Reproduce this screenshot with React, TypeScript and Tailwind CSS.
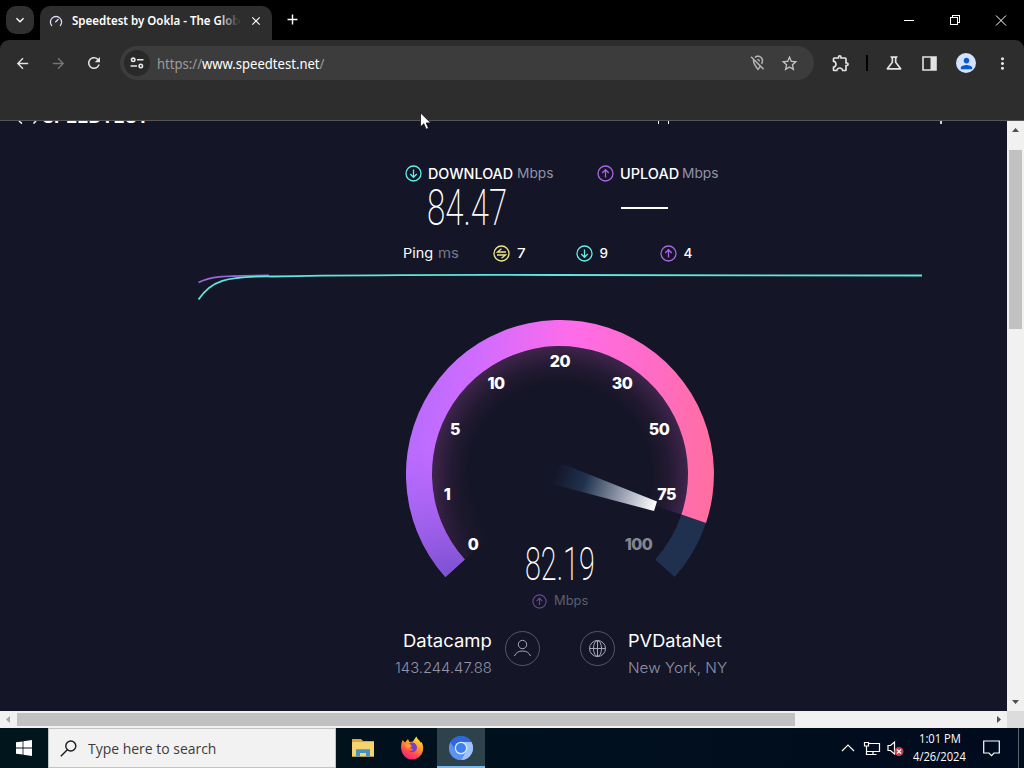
import { useLayoutEffect, useRef, useState } from "react";
import type { ReactNode } from "react";
import {
  MdAdd,
  MdArrowBack,
  MdArrowForward,
  MdClose,
  MdExpandMore,
  MdMoreVert,
  MdOutlineExtension,
  MdOutlineLocationOff,
  MdOutlineScience,
  MdPerson,
  MdRefresh,
  MdStarBorder,
} from "react-icons/md";

// Keeps a label at a set width whatever face ends up rendering it
function Fit({
  w,
  className = "",
  children,
}: {
  w: number;
  className?: string;
  children: ReactNode;
}) {
  const ref = useRef<HTMLSpanElement>(null);
  const [scale, setScale] = useState(1);

  useLayoutEffect(() => {
    if (ref.current) setScale(w / ref.current.offsetWidth);
  }, [w]);

  return (
    <span className={`block shrink-0 whitespace-nowrap ${className}`} style={{ width: w }}>
      <span ref={ref} className="inline-block origin-left" style={{ transform: `scaleX(${scale})` }}>
        {children}
      </span>
    </span>
  );
}

function RoundArrow({ dir, size = 17 }: { dir: "down" | "up" | "both"; size?: number }) {
  const color = dir === "down" ? "#62f0e6" : dir === "up" ? "#a966e0" : "#f0e68c";
  return (
    <svg width={size} height={size} viewBox="0 0 17 17" fill="none" stroke={color} strokeWidth="1.3" className="shrink-0">
      <circle cx="8.5" cy="8.5" r="7.5" />
      {dir === "down" && <path d="M8.5 4.500v7.800M5.200 9l3.300 3.300L11.800 9" />}
      {dir === "up" && <path d="M8.500 12.500V4.700M5.200 8l3.300-3.300L11.800 8" />}
      {dir === "both" && <path d="M13 7H4.500L8.500 3.800M4 10h8.500l-4 3.200" />}
    </svg>
  );
}

function TitleBar() {
  return (
    <div className="flex h-10 items-end bg-black text-white">
      <div className="mb-[6px] ml-[6px] flex h-7 w-7 items-center justify-center rounded-[10px] bg-[#303030]">
        <MdExpandMore size={16} />
      </div>
      <div className="ml-[6px] flex h-[34px] w-[232px] items-center rounded-t-[10px] bg-[#2d2d2d] pb-[4px]">
        <svg width="14" height="14" viewBox="0 0 14 14" fill="none" stroke="#dcdcf5" strokeWidth="1.3" className="ml-[9px]">
          <path d="M3 12A5.600 5.600 0 1 1 11 12M6.300 8.200 9.500 5" />
        </svg>
        <div className="relative ml-[9px]">
          <Fit w={167} className="font-['Noto_Sans'] text-xs font-semibold">
            Speedtest by Ookla - The Glob
          </Fit>
          <span className="absolute inset-y-0 right-0 w-5 bg-linear-to-r from-transparent to-[#2d2d2d]" />
        </div>
        <MdClose size={14} className="ml-[10px]" />
      </div>
      <MdAdd size={17} className="mb-[12px] ml-3" />
      <div className="ml-auto flex h-10 items-center">
        <svg width="120" height="12" viewBox="0 0 120 12" fill="none" stroke="white" shapeRendering="crispEdges" className="mr-[8px]">
          <path d="M8 6.500h10M54.500 3.500h7v7h-7zM56.500 3.500v-2h7v7h-2" />
          <path d="m100 1.500 10 10m0-10-10 10" shapeRendering="auto" />
        </svg>
      </div>
    </div>
  );
}

function Toolbar() {
  return (
    <div className="h-20 bg-black">
      <div className="flex h-20 items-start rounded-t-[9px] bg-[#2d2d2d] pt-[6px]">
        <div className="flex h-[34px] items-center text-[#e3e3e3]">
          <MdArrowBack size={17} className="ml-[13.5px]" />
          <MdArrowForward size={17} className="ml-[19px] text-[#757575]" />
          <MdRefresh size={18} className="ml-[18.5px]" />
        </div>
        <div className="ml-[17px] flex h-[34px] w-[694px] items-center rounded-full bg-[#3c3c3c]">
          <div className="ml-[4px] flex h-[26px] w-[26px] items-center justify-center rounded-full bg-[#292929]">
            <svg width="14" height="12" viewBox="0 0 14 12" fill="none" stroke="#e8e8e8" strokeWidth="1.600">
              <circle cx="3.200" cy="2.800" r="1.700" />
              <circle cx="10.800" cy="9" r="1.700" />
              <path d="M7 2.800h6.500M.5 9H7" />
            </svg>
          </div>
          <Fit w={167} className="ml-[7px] pt-px font-['Noto_Sans'] text-sm text-[#9c9c9c]">
            https://<span className="text-white">www.speedtest.net</span>/
          </Fit>
          <MdOutlineLocationOff size={18} className="ml-[424.5px] text-[#b5b5b5]" />
          <MdStarBorder size={19} className="ml-[13px] text-[#c7c7c7]" />
        </div>
        <div className="flex h-[34px] items-center text-[#e3e3e3]">
          <MdOutlineExtension size={20} className="ml-[17px]" />
          <span className="ml-[15px] h-4 w-[2px] bg-black" />
          <MdOutlineScience size={20} className="ml-[16px]" />
          <svg width="15" height="15" viewBox="0 0 15 15" className="ml-[18px]">
            <path d="M1 1h13v13H1z" fill="none" stroke="#e3e3e3" strokeWidth="1.600" />
            <path d="M8.500 1H14v13H8.500z" fill="#e3e3e3" />
          </svg>
          <span className="ml-[19px] flex h-5 w-5 items-center justify-center rounded-full bg-[#d3e3fd] text-[#0b57d0]">
            <MdPerson size={17} />
          </span>
          <MdMoreVert size={19} className="ml-[17px]" />
        </div>
      </div>
    </div>
  );
}

const ticks = [
  { label: "0", x: 67, y: 224 },
  { label: "1", x: 41, y: 174 },
  { label: "5", x: 49, y: 109 },
  { label: "10", x: 90, y: 63 },
  { label: "20", x: 154, y: 41 },
  { label: "30", x: 216, y: 63 },
  { label: "50", x: 253, y: 109 },
  { label: "75", x: 260.5, y: 174 },
  { label: "100", x: 232.5, y: 224 },
];

const ARC = "M39.400 256.900A154 154 0 1 1 300 202.900L275.400 194.600A128 128 0 1 0 58.700 239.500Z";

function Gauge() {
  return (
    <svg width="308" height="258" viewBox="0 0 308 258" className="block">
      <defs>
        <linearGradient id="arc" gradientUnits="userSpaceOnUse" x1="0" y1="130" x2="308" y2="160">
          <stop offset="0" stopColor="#b86bff" />
          <stop offset=".2" stopColor="#d06cff" />
          <stop offset=".5" stopColor="#ff6cea" />
          <stop offset=".8" stopColor="#ff6cc0" />
          <stop offset="1" stopColor="#ff6f9e" />
        </linearGradient>
        <radialGradient id="shade" gradientUnits="userSpaceOnUse" cx="50" cy="275" r="150">
          <stop offset="0" stopColor="#6a4cc8" />
          <stop offset=".25" stopColor="#7650d0" stopOpacity=".8" />
          <stop offset="1" stopColor="#9060e8" stopOpacity="0" />
        </radialGradient>
        <radialGradient id="glow" gradientUnits="userSpaceOnUse" cx="154" cy="154" r="128">
          <stop offset=".7" stopColor="#a04090" stopOpacity="0" />
          <stop offset=".85" stopColor="#a848a0" stopOpacity=".1" />
          <stop offset="1" stopColor="#b04cb0" stopOpacity=".28" />
        </radialGradient>
        <radialGradient id="glowFade" gradientUnits="userSpaceOnUse" cx="75" cy="255" r="100">
          <stop offset=".1" stopColor="#141526" stopOpacity=".8" />
          <stop offset="1" stopColor="#141526" stopOpacity="0" />
        </radialGradient>
        <linearGradient id="needle" gradientUnits="userSpaceOnUse" x1="148" y1="152" x2="250" y2="186">
          <stop offset="0" stopColor="#1d3152" stopOpacity="0" />
          <stop offset=".3" stopColor="#20324f" />
          <stop offset=".75" stopColor="#b4b8c6" />
          <stop offset="1" stopColor="#fff" />
        </linearGradient>
      </defs>
      <path d="M58.700 239.500A128 128 0 1 1 275.400 194.600L154 154Z" fill="url(#glow)" />
      <path d="M58.700 239.500A128 128 0 1 1 275.400 194.600L154 154Z" fill="url(#glowFade)" />
      <path d="M275.400 194.600A128 128 0 0 1 249.300 239.500L268.600 256.900A154 154 0 0 0 300 202.900Z" fill="#20304f" />
      <path d={ARC} fill="url(#arc)" />
      <path d={ARC} fill="url(#shade)" />
      <path d="M154.500 143 251 181.500 248 191 146 164Z" fill="url(#needle)" />
      {ticks.map((t) => (
        <text
          key={t.label}
          x={t.x}
          y={t.y + 5.5}
          textAnchor="middle"
          className={`font-['Inter'] text-[16px] font-extrabold tracking-[-0.5px] ${t.label === "100" ? "fill-[#85858f]" : "fill-white"}`}
        >
          {t.label}
        </text>
      ))}
    </svg>
  );
}

function SpeedTest() {
  return (
    <main className="h-[590px] w-[1007px] overflow-hidden bg-[#141526] font-['Inter'] text-white">
      <header className="flex h-[4px] overflow-hidden">
        <svg width="24" height="3" viewBox="0 0 24 3" fill="none" stroke="white" strokeWidth="1.500" className="ml-[18px]">
          <path d="M1 0q1.500 1.500 3 2.500M15.500 2.500 18 0" />
        </svg>
        <Fit w={107} className="mt-[-15px] text-[20px] leading-5 font-bold">
          SPEEDTEST
        </Fit>
        <span className="ml-[509px] h-[3px] w-px bg-white" />
        <span className="ml-[9px] h-[3px] w-px bg-white" />
        <span className="ml-[271px] h-[3px] w-[2px] bg-white/80" />
      </header>

      <div className="mt-[38px] ml-[405px] flex h-[21px] items-center text-[14px] leading-[21px]">
        <RoundArrow dir="down" />
        <Fit w={85} className="ml-[6px] font-medium">DOWNLOAD</Fit>
        <Fit w={37} className="ml-[4px] text-[13px] text-[#9193a8]">Mbps</Fit>
        <span className="w-[43px]" />
        <RoundArrow dir="up" />
        <Fit w={59} className="ml-[6px] font-medium">UPLOAD</Fit>
        <Fit w={37} className="ml-[3px] text-[13px] text-[#9193a8]">Mbps</Fit>
      </div>

      <div className="ml-[427px] flex h-[48px] items-center">
        <Fit w={80} className="font-['Roboto'] text-[50px] leading-[48px] font-extralight">84.47</Fit>
        <span className="ml-[114px] h-[2px] w-[47px] bg-white" />
      </div>

      <div className="mt-[11px] ml-[403px] flex h-[21px] items-center text-[13.5px] leading-[21px]">
        <Fit w={30}>Ping</Fit>
        <Fit w={21} className="ml-[5px] text-[#77798f]">ms</Fit>
        <span className="w-[34px]" />
        <RoundArrow dir="both" />
        <Fit w={9} className="ml-[6.5px] font-medium">7</Fit>
        <span className="w-[50.5px]" />
        <RoundArrow dir="down" />
        <Fit w={9} className="ml-[6.5px] font-medium">9</Fit>
        <span className="w-[51.5px]" />
        <RoundArrow dir="up" />
        <Fit w={9} className="ml-[6.5px] font-medium">4</Fit>
      </div>

      <svg width="726" height="32" viewBox="0 0 726 32" fill="none" strokeWidth="1.800" className="mt-[6px] ml-[197px] block">
        <path d="M1.500 12.500C14 6 22 6 72 5.500" stroke="#9a68d8" />
        <path d="M1.500 29.500C14 11 28 6 75 6.500C200 4.500 260 5 360 5L725 5.500" stroke="#5fe6de" />
      </svg>

      <div className="mt-[18px] ml-[406px]">
        <Gauge />
      </div>

      <div className="mt-[-36px] ml-[525px] h-[44px]">
        <Fit w={70} className="font-['Roboto'] text-[46px] leading-[44px] font-extralight">82.19</Fit>
      </div>

      <div className="mt-[5px] ml-[532px] flex h-[20px] items-center gap-[7px] opacity-60">
        <RoundArrow dir="up" size={15} />
        <Fit w={34} className="text-[12.5px] leading-5 text-[#8b8da3]">Mbps</Fit>
      </div>

      <div className="mt-[17px] ml-[395px] flex h-[54px] items-start">
        <div className="flex w-[97px] flex-col items-end">
          <Fit w={89} className="text-[17px] leading-[27px]">Datacamp</Fit>
          <Fit w={97} className="text-[14.5px] leading-[26px] font-light text-[#9193a8]">143.244.47.88</Fit>
        </div>
        <svg width="110" height="36" viewBox="0 0 110 36" fill="none" stroke="#a7a8b8" className="mt-[2px] mr-[13px] ml-[13px]">
          <circle cx="17.500" cy="18.500" r="17" stroke="#55566b" />
          <circle cx="17.500" cy="14.500" r="4.200" />
          <path d="M9.500 26q2-5 8-5t8 5" />
          <circle cx="92.500" cy="18.500" r="17" stroke="#55566b" />
          <circle cx="92.500" cy="18.500" r="8" />
          <ellipse cx="92.500" cy="18.500" rx="4" ry="8" />
          <path d="M84.500 18.500h16M92.500 10.500v16" />
        </svg>
        <div>
          <Fit w={94} className="text-[17px] leading-[27px]">PVDataNet</Fit>
          <Fit w={99} className="text-[14.5px] leading-[26px] font-light text-[#9193a8]">New York, NY</Fit>
        </div>
      </div>
    </main>
  );
}

function Taskbar() {
  return (
    <footer className="flex h-10 items-center bg-linear-to-r from-[#00151c] to-[#010b1e] font-['Open_Sans'] text-white">
      <svg width="16" height="16" viewBox="0 0 16 16" fill="white" className="ml-4">
        <path d="M0 2.300 6.600 1.400v6.200H0zM7.400 1.300 16 0v7.600H7.400zM0 8.400h6.600v6.200L0 13.700zM7.400 8.400H16V16l-8.600-1.300z" />
      </svg>
      <div className="ml-4 flex h-10 w-72 items-center border border-[#bfc3c5] bg-[#f2f2f2]">
        <svg width="17" height="17" viewBox="0 0 17 17" fill="none" stroke="#1c1c1c" strokeWidth="1.400" className="ml-[11px]">
          <circle cx="10.800" cy="6" r="5" />
          <path d="M7.300 9.700.8 16.200" />
        </svg>
        <Fit w={128} className="ml-[11px] pt-px text-[14.5px] text-[#3c3c3c]">Type here to search</Fit>
      </div>

      <svg width="22" height="20" viewBox="0 0 22 20" className="ml-4">
        <path d="M0 1h9l2 2h11v15.500H0z" fill="#e0a63a" />
        <path d="M1 4h21v14.500H0V5z" fill="#f5d470" />
        <path d="M4 18.500v-7.300h14v7.300h-4v-3.500H8v3.500z" fill="#4592c4" />
      </svg>

      <svg width="24" height="24" viewBox="0 0 24 24" className="ml-[26px]">
        <defs>
          <linearGradient id="fox" x1=".8" y1="0" x2=".3" y2="1">
            <stop offset="0" stopColor="#fff04a" />
            <stop offset=".4" stopColor="#ff9a2c" />
            <stop offset=".75" stopColor="#ff4058" />
            <stop offset="1" stopColor="#e8257c" />
          </linearGradient>
        </defs>
        <path d="M2.500 4 5 6.500 8 3l1.500 3L13 5.500C14 4 15 2 16.500.5c.5 2.500 3 3.500 4 6l1-.5C26 14 21 23.500 12 23.500S-1.500 13 2.500 4Z" fill="url(#fox)" />
        <path d="M9 7.500C12 5 17 7 17 12c-.5 4-5 5.500-8 3 2.500.3 3.500-.5 4-2-2 0-3-1.500-4.500-3Z" fill="#7a3fc4" />
        <path d="M4.500 8.500 9.500 7.500l2.500 3c-2 .5-2.500 2-4.500 2Z" fill="#ff9a32" />
      </svg>

      <div className="ml-[13px] flex h-10 w-12 items-center justify-center border-b-2 border-[#76b9ed] bg-[#2e424b]">
        <svg width="24" height="24" viewBox="0 0 24 24" className="mt-px">
          <circle cx="12" cy="12" r="12" fill="#3b78e7" />
          <path d="M12 6h10.400A12 12 0 0 1 12 24l5.200-9Z" fill="#a1c2fa" />
          <path d="M1.600 6A12 12 0 0 0 12 24l5.200-9H6.800Z" fill="#5c93f2" />
          <path d="M1.600 6A12 12 0 0 1 22.400 6H12l-5.200 9Z" fill="#2f68dc" />
          <circle cx="12" cy="12" r="6.300" fill="#dfeafd" />
          <circle cx="12" cy="12" r="5" fill="#3b82ef" />
        </svg>
      </div>

      <svg width="64" height="16" viewBox="0 0 64 16" fill="none" stroke="white" strokeWidth="1.200" className="ml-auto">
        <path d="m2 11 6-6 6 6" />
        <path d="M28.500 3.500H39.500v8H27M33 11.500v3M29.500 14.500h7M24.500 2.500h4v3.500h-4zM26.500 6v8.500h3" />
        <path d="M48 5.500h2.500l4-3.500v12l-4-3.500H48z" />
        <circle cx="59" cy="11.500" r="4.500" fill="#c9404c" stroke="none" />
        <path d="m57 9.500 4 4m0-4-4 4" />
      </svg>
      <div className="ml-[9px] flex w-[53px] flex-col items-center text-[12px] leading-[18px]">
        <Fit w={42}>1:01 PM</Fit>
        <Fit w={53}>4/26/2024</Fit>
      </div>
      <svg width="17" height="17" viewBox="0 0 17 17" fill="none" stroke="white" strokeWidth="1.200" className="ml-[17px]">
        <path d="M.7 1h15.600v12H11l-2.500 2.700L6 13H.7z" />
      </svg>
      <span className="mr-[5px] ml-[18px] h-10 w-px bg-[#59616b]" />
    </footer>
  );
}

export default function App() {
  return (
    <div className="relative h-[768px] w-[1024px] overflow-hidden bg-black">
      <TitleBar />
      <Toolbar />
      <div className="h-px bg-[#56565a]" />
      <div className="flex">
        <SpeedTest />
        <div className="flex h-[590px] w-[17px] flex-col items-center bg-[#f1f1f1]">
          <svg width="7" height="4" viewBox="0 0 7 4" fill="#505050" className="mt-[7px]">
            <path d="M0 4 3.500 0 7 4z" />
          </svg>
          <div className="mt-[18px] h-[179px] w-[13px] bg-[#c1c1c1]" />
          <svg width="7" height="4" viewBox="0 0 7 4" fill="#505050" className="mt-auto mb-[7px]">
            <path d="M0 0h7L3.500 4z" />
          </svg>
        </div>
      </div>
      <div className="flex h-[17px] items-center bg-[#f1f1f1]">
        <svg width="4" height="7" viewBox="0 0 4 7" fill="#a3a3a3" className="ml-[6px]">
          <path d="M4 0v7L0 3.500z" />
        </svg>
        <div className="ml-[7px] h-[13px] w-[778px] bg-[#c1c1c1]" />
        <svg width="4" height="7" viewBox="0 0 4 7" fill="#505050" className="ml-auto">
          <path d="M0 0v7l4-3.500z" />
        </svg>
        <div className="ml-[6px] h-[17px] w-[17px] bg-[#dcdcdc]" />
      </div>
      <Taskbar />

      <svg width="12" height="19" viewBox="0 0 12 19" className="absolute top-[112px] left-[420px]">
        <path d="M.5.800v14l3.300-3.100 2.300 5.500 2.400-1-2.300-5.300h4.500z" fill="white" stroke="black" strokeWidth=".7" />
      </svg>
    </div>
  );
}
